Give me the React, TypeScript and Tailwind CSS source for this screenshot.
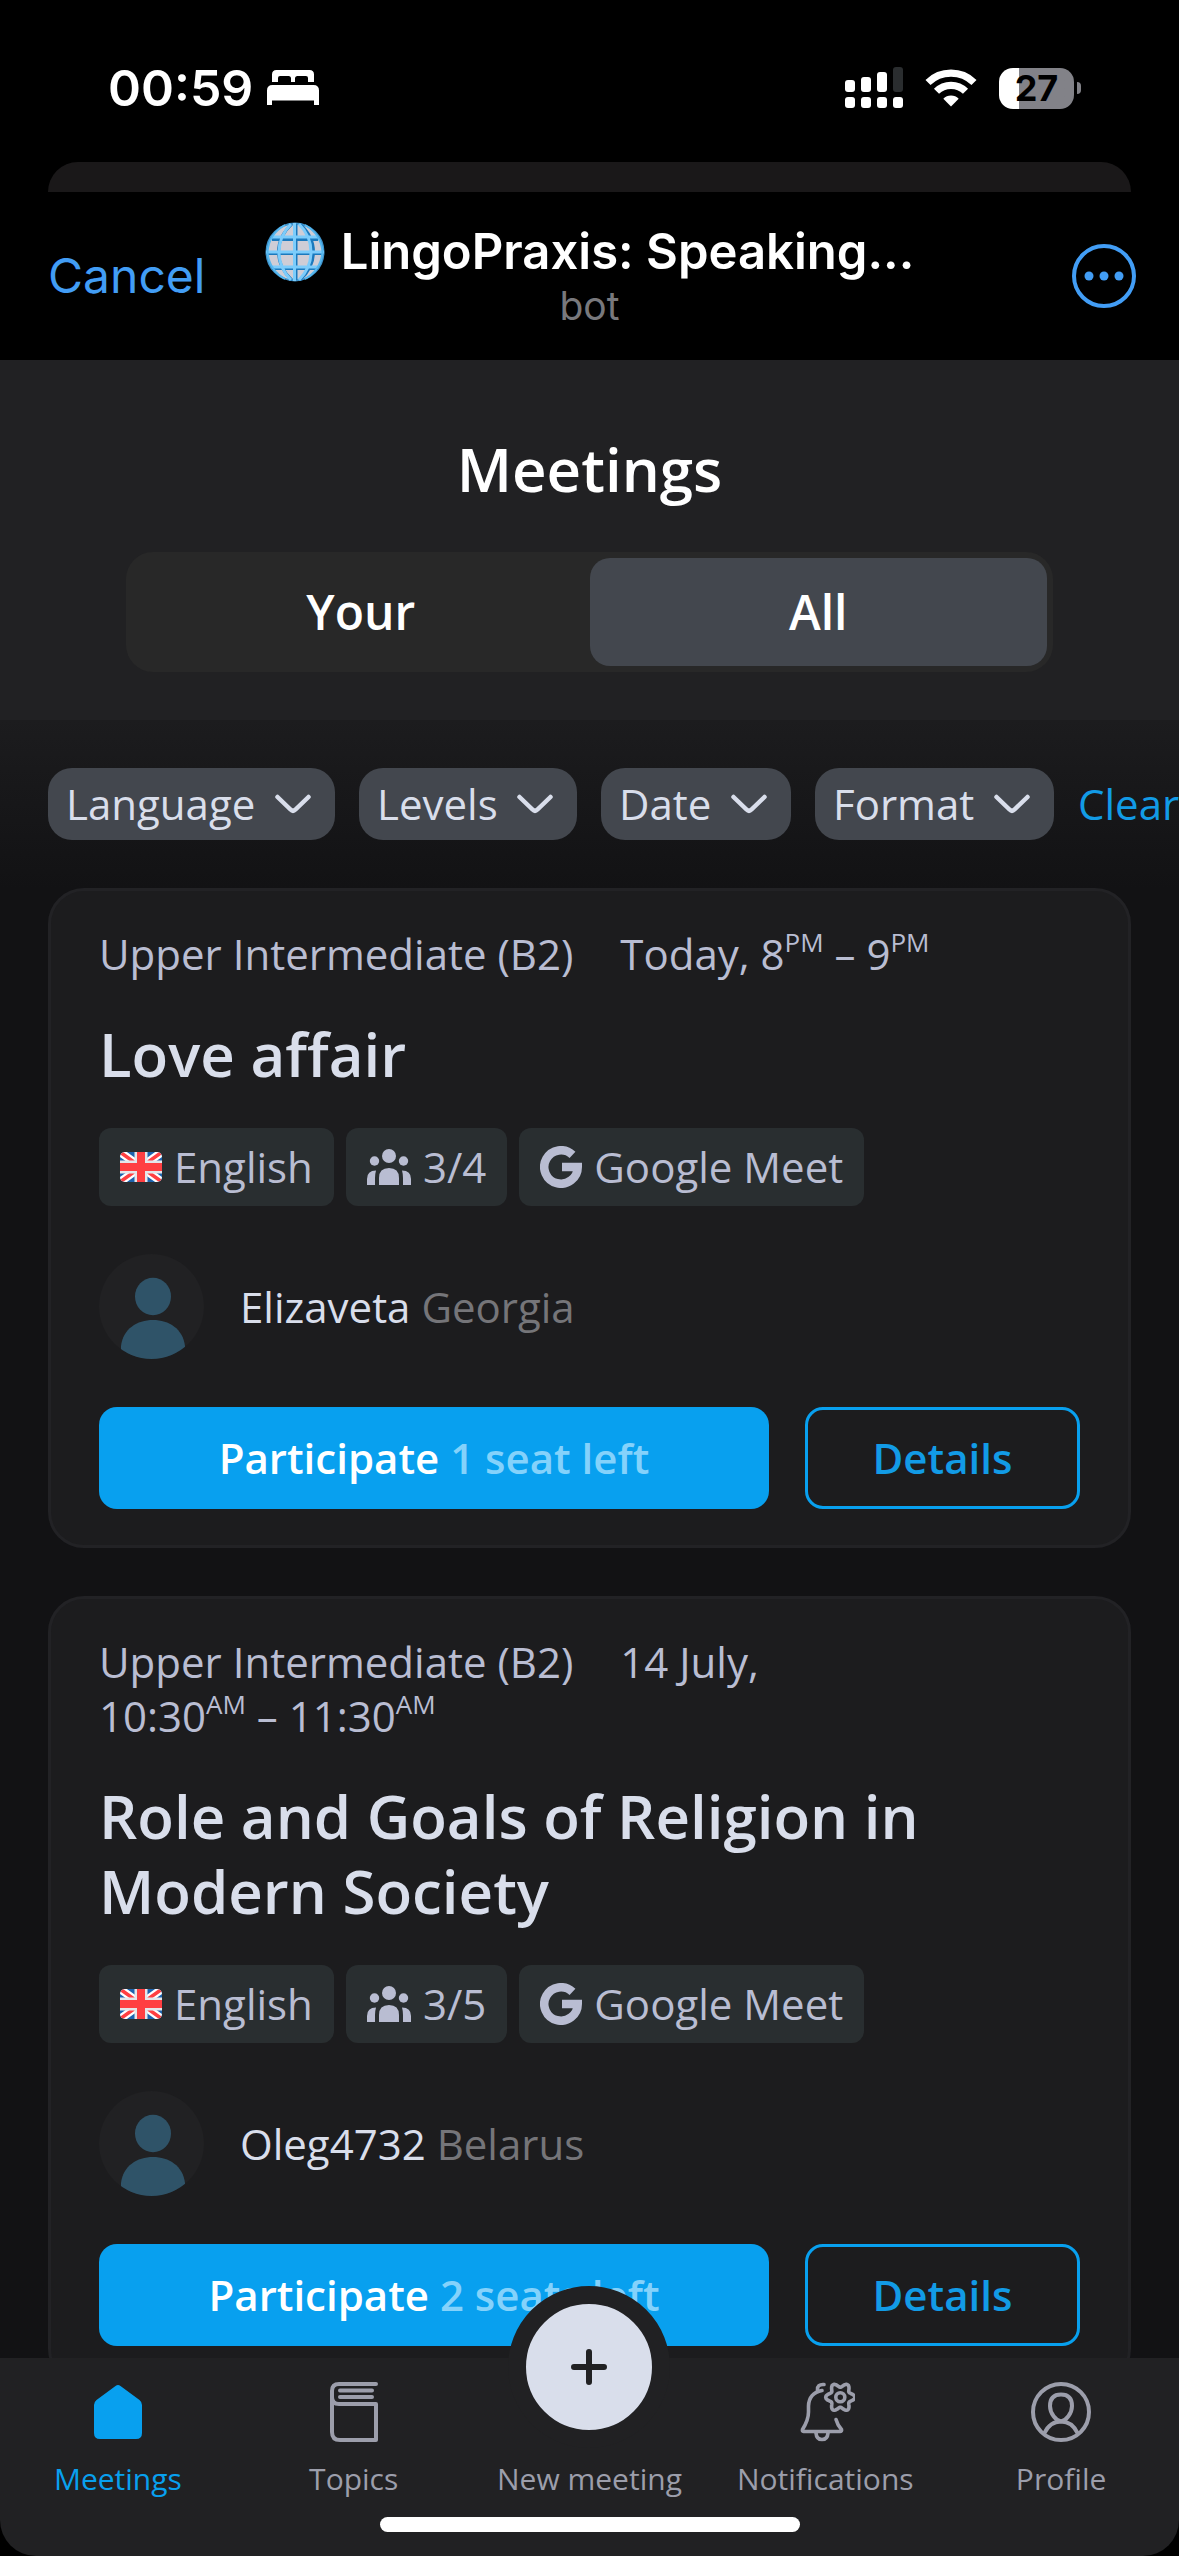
import { useState } from "react";
import type { ReactNode } from "react";

interface Meeting {
  level: string;
  day: string;
  from: [string, string];
  to: [string, string];
  title: string;
  seats: string;
  host: string;
  country: string;
  left: string;
}

const meetings: Meeting[] = [
  {
    level: "Upper Intermediate (B2)",
    day: "Today,",
    from: ["8", "PM"],
    to: ["9", "PM"],
    title: "Love affair",
    seats: "3/4",
    host: "Elizaveta",
    country: "Georgia",
    left: "1 seat left",
  },
  {
    level: "Upper Intermediate (B2)",
    day: "14 July,",
    from: ["10:30", "AM"],
    to: ["11:30", "AM"],
    title: "Role and Goals of Religion in Modern Society",
    seats: "3/5",
    host: "Oleg4732",
    country: "Belarus",
    left: "2 seats left",
  },
];

const filters = ["Language", "Levels", "Date", "Format"];

// Six-lobed outline for the gear on the notifications icon
const gearPath =
  Array.from({ length: 72 }, (_, i) => {
    const a = (i / 72) * Math.PI * 2;
    const r = 12.3 + 2.3 * Math.cos(6 * a);
    return `${i ? "L" : "M"}${(45.3 + r * Math.cos(a)).toFixed(2)} ${(15.3 + r * Math.sin(a)).toFixed(2)}`;
  }).join("") + "Z";

const BedIcon = () => (
  <svg viewBox="0 0 52 36" className="w-[52px] h-[36px]" fill="#fff" aria-hidden="true">
    <path d="M5 12V4.500Q5 0 9.500 0H42.500Q47 0 47 4.500V12H41V8Q41 6 39 6H30.500Q28 6 28 8.500V12H24V8.500Q24 6 21.500 6H13Q11 6 11 8V12Z" />
    <path d="M0 20.500Q0 15 5.500 15H46.500Q52 15 52 20.500V35H47V30.500H5V35H0Z" />
  </svg>
);

const SignalIcon = () => (
  <svg viewBox="0 0 58 42" className="w-[58px] h-[42px]" fill="#fff" aria-hidden="true">
    <rect x="0" y="13" width="10" height="12" rx="3" />
    <rect x="16" y="10" width="10" height="15" rx="3" />
    <rect x="32" y="5" width="10" height="20" rx="3" />
    <rect x="48" y="0" width="10" height="25" rx="3" fill="#2a2d2f" />
    <rect x="0" y="30" width="10" height="11" rx="3" />
    <rect x="16" y="30" width="10" height="11" rx="3" />
    <rect x="32" y="30" width="10" height="11" rx="3" />
    <rect x="48" y="30" width="10" height="11" rx="3" />
  </svg>
);

const WifiIcon = () => (
  <svg viewBox="0 0 52 38" className="w-[52px] h-[38px]" fill="none" stroke="#fff" strokeWidth="7.200" aria-hidden="true">
    <path d="M3 13.500A33 33 0 0 1 49 13.500" />
    <path d="M11.500 22.300A20.500 20.500 0 0 1 40.500 22.300" />
    <path d="M26 37.500L18.300 29.700A11 11 0 0 1 33.700 29.700Z" fill="#fff" stroke="none" />
  </svg>
);

const GlobeIcon = () => (
  <svg viewBox="0 0 60 60" className="w-[60px] h-[60px]" fill="none" stroke="#55b7ef" strokeWidth="3" aria-hidden="true">
    <circle cx="30" cy="30" r="28.500" fill="#cfcdd6" stroke="#3f94cc" strokeWidth="2" />
    <g stroke="#1b79bd">
      <path d="M31 2V58M27 2C9 18 9 42 27 58M35 2C53 18 53 42 35 58M2 31.500H58M7 17.500H53M7 46.500H53" />
    </g>
    <path d="M29.500 1V59M26 2C10 18 10 42 26 58M34 2C50 18 50 42 34 58M1 30H59M7 15H53M7 45H53" stroke="#7cccfb" />
    <path d="M20 3Q4 12 2.500 30M40 3Q56 12 57.500 30M2.500 30Q4 48 20 57M57.500 30Q56 48 40 57" strokeWidth="2" />
  </svg>
);

const ChevronIcon = () => (
  <svg
    viewBox="0 0 36 36"
    className="pointer-events-none absolute right-6 top-[18px] w-9 h-9"
    fill="none"
    stroke="#d9deeb"
    strokeWidth="4.500"
    strokeLinecap="round"
    strokeLinejoin="round"
    aria-hidden="true"
  >
    <path d="M2.500 11L15.500 23.500Q18 26 20.500 23.500L33.500 11" />
  </svg>
);

const FlagIcon = () => (
  <svg viewBox="0 0 42 30" className="w-[42px] h-[30px] rounded-[5px]" aria-hidden="true">
    <rect width="42" height="30" fill="#1c63ad" />
    <path d="M0 0L42 30M42 0L0 30" stroke="#fff" strokeWidth="8" />
    <path d="M0 0L42 30M42 0L0 30" stroke="#ff3f42" strokeWidth="3.500" />
    <path d="M21 0V30M0 15H42" stroke="#e4e6ea" strokeWidth="13" />
    <path d="M21 0V30M0 15H42" stroke="#ff3f42" strokeWidth="8" />
  </svg>
);

const PeopleIcon = () => (
  <svg viewBox="0 0 44 38" className="w-[44px] h-[38px]" fill="#b9bdd2" aria-hidden="true">
    <circle cx="22" cy="8" r="7" />
    <circle cx="7.500" cy="13" r="4.700" />
    <circle cx="36.500" cy="13" r="4.700" />
    <path d="M12 37V30Q12 20 22 20T32 30V37ZM0 37V31Q0 22.500 9 22.500Q8 26 8 30V37ZM44 37V31Q44 22.500 35 22.500Q36 26 36 30V37Z" />
  </svg>
);

const GoogleIcon = () => (
  <svg viewBox="0 0 42 42" className="w-[42px] h-[42px]" fill="none" stroke="#b9bdd2" strokeWidth="8.500" aria-hidden="true">
    <path d="M32.500 8.800A16.750 16.750 0 1 0 37.750 21H22" />
  </svg>
);

const Avatar = () => (
  <span className="block shrink-0 overflow-hidden rounded-full bg-[#212123] w-[105px] h-[105px]">
    <svg viewBox="0 0 105 105" fill="#2f5368" aria-hidden="true">
      <ellipse cx="54" cy="42.500" rx="18" ry="18.700" />
      <path d="M22 92C24 75 38 66 54 66S84 75 86 92V105H22Z" />
    </svg>
  </span>
);

const HomeIcon = () => (
  <svg viewBox="0 0 60 60" className="w-[60px] h-[60px]" fill="currentColor" aria-hidden="true">
    <path d="M27.500 4Q30 2 32.500 4L51.500 18Q54 20 54 23V51Q54 57 48 57H12Q6 57 6 51V23Q6 20 8.500 18Z" />
  </svg>
);

const BookIcon = () => (
  <svg viewBox="0 0 60 60" className="w-[60px] h-[60px]" fill="none" stroke="currentColor" strokeWidth="4" strokeLinecap="round" strokeLinejoin="round" aria-hidden="true">
    <path d="M52 2H15Q8 2 8 9V50Q8 58 16 58H52V22H15Q8 22 8 15" />
    <path d="M16 8.500H48M16 15H48" />
  </svg>
);

const BellIcon = () => (
  <svg viewBox="0 0 60 60" className="w-[60px] h-[60px]" fill="none" stroke="currentColor" strokeWidth="3.600" strokeLinecap="round" strokeLinejoin="round" aria-hidden="true">
    <path d="M27 8.500Q14 11 13.500 24V30Q13.500 38 7.500 47.500Q7 49.500 8.500 49.500H45Q47 49.500 46.500 47.500Q42.500 43 41 37.500" />
    <path d="M22.500 8Q22 2 29 2.500" />
    <path d="M21 50V51Q21.500 57.500 27 57.500T33 51V50" />
    <path d={gearPath} />
    <circle cx="45.300" cy="15.300" r="4.500" />
  </svg>
);

const ProfileIcon = () => (
  <svg viewBox="0 0 60 60" className="w-[60px] h-[60px]" fill="none" stroke="currentColor" strokeWidth="4" strokeLinecap="round" aria-hidden="true">
    <circle cx="30" cy="30" r="28" />
    <path d="M30 39.500C25 38.500 19 31.500 19 24Q19 12.500 30 12.500T41 24C41 31.500 35 38.500 30 39.500Z" />
    <path d="M13.500 51Q19 39.500 30 39.500T46.500 51" />
  </svg>
);

const Tag = ({ icon, children }: { icon: ReactNode; children: ReactNode }) => (
  <li className="flex h-[78px] items-center gap-3 rounded-xl bg-[#292e30] px-[21px]">
    {icon}
    {children}
  </li>
);

const Time = ({ value: [hour, half] }: { value: [string, string] }) => (
  <>
    {hour}
    <sup className="static align-[18px] text-[26px] leading-none">{half}</sup>
  </>
);

const MeetingCard = ({ meeting }: { meeting: Meeting }) => (
  <article className="rounded-[36px] border-[3px] border-[#222225] bg-[#1c1c1e] px-12 py-9">
    <p className="max-w-[860px] text-[#b9bdd2] leading-[54px]">
      <span className="mr-9">{meeting.level}</span> {meeting.day}{" "}
      <span className="whitespace-nowrap">
        <Time value={meeting.from} /> – <Time value={meeting.to} />
      </span>
    </p>
    <h2 className="mt-9 text-[60px] leading-[75px] font-semibold text-[#d9deeb]">{meeting.title}</h2>
    <ul className="mt-9 flex flex-wrap gap-3 text-[#b9bdd2]">
      <Tag icon={<FlagIcon />}>English</Tag>
      <Tag icon={<PeopleIcon />}>{meeting.seats}</Tag>
      <Tag icon={<GoogleIcon />}>Google Meet</Tag>
    </ul>
    <div className="mt-12 flex items-center gap-9">
      <Avatar />
      <p className="text-[#d9deeb]">
        {meeting.host} <span className="text-[#757579]">{meeting.country}</span>
      </p>
    </div>
    <div className="mt-12 flex gap-9 font-semibold">
      <button className="h-[102px] grow rounded-[18px] bg-[#08a0ef] text-white">
        Participate <span className="text-[#84d2fb]">{meeting.left}</span>
      </button>
      <button className="h-[102px] w-[275px] rounded-[18px] border-[3px] border-[#08a0ef] text-[#129be6]">
        Details
      </button>
    </div>
  </article>
);

const NavLink = ({ icon, label, active }: { icon: ReactNode; label: string; active?: boolean }) => (
  <a
    href="#"
    aria-current={active ? "page" : undefined}
    className={`flex flex-col items-center gap-4 pt-6 ${active ? "text-[#08a0ef]" : "text-[#9c9eab]"}`}
  >
    {icon}
    <span className="whitespace-nowrap">{label}</span>
  </a>
);

function App() {
  const [tab, setTab] = useState("All");

  return (
    <div className="min-h-screen bg-[#121214] font-['Open_Sans',sans-serif] text-[42px] leading-[54px]">
      {/* Phone status bar and Telegram header */}
      <div className="bg-black font-['Inter',sans-serif] text-white">
        <div className="flex h-[162px] items-center justify-between pt-[14px] pl-[108px] pr-[98px]">
          <div className="flex items-center gap-[14px]">
            <span className="text-[50px] font-semibold">00:59</span>
            <BedIcon />
          </div>
          <div className="flex items-center gap-[22px]">
            <SignalIcon />
            <WifiIcon />
            <div className="flex items-center gap-[3px]">
              <span className="flex h-[41px] w-[75px] items-center justify-center rounded-[14px] bg-linear-to-r from-white from-27% to-[#828288] to-27% text-[36px] font-bold text-black">
                27
              </span>
              <span className="h-[12px] w-[4px] rounded-r-full bg-[#828288]" />
            </div>
          </div>
        </div>
        <div className="mx-12 h-[30px] rounded-t-[30px] bg-[#1a1819]" />
        <header className="flex h-[168px] items-center pr-[43px] pl-12">
          <button className="w-[175px] text-left text-[#429df5] text-[48px]">Cancel</button>
          <div className="flex min-w-0 grow flex-col items-center">
            <h1 className="flex items-center gap-4 whitespace-nowrap text-[49px] leading-[60px] font-semibold">
              <GlobeIcon />
              LingoPraxis: Speaking...
            </h1>
            <p className="text-[39px] leading-[48px] text-[#78787c]">bot</p>
          </div>
          <button aria-label="More" className="flex w-[180px] justify-end">
            <svg viewBox="0 0 64 64" className="w-[64px] h-[64px]" fill="#429df5" aria-hidden="true">
              <circle cx="32" cy="32" r="30" fill="none" stroke="#429df5" strokeWidth="4" />
              <circle cx="17" cy="32" r="4.500" />
              <circle cx="32" cy="32" r="4.500" />
              <circle cx="47" cy="32" r="4.500" />
            </svg>
          </button>
        </header>
      </div>

      <section className="bg-[#212123] px-[126px] pt-[72px] pb-12 text-center font-semibold text-white">
        <h2 className="text-[60px] leading-[75px]">Meetings</h2>
        <div role="tablist" className="mt-[45px] grid h-[120px] grid-cols-2 rounded-[27px] bg-[#282828] p-[6px] text-[48px]">
          {["Your", "All"].map((name) => (
            <button
              key={name}
              role="tab"
              aria-selected={tab === name}
              onClick={() => setTab(name)}
              className={`rounded-[20px] ${tab === name ? "bg-[#43474e]" : ""}`}
            >
              {name}
            </button>
          ))}
        </div>
      </section>

      <div className="flex items-center gap-6 overflow-x-auto bg-linear-to-b from-[#1c1c1e] to-[#121214] py-12 pl-12 [scrollbar-width:none]">
        {filters.map((name) => (
          <div key={name} className="relative shrink-0">
            <select
              aria-label={name}
              className="block h-[72px] appearance-none rounded-[24px] bg-[#43474e] pl-[18px] pr-[79px] text-[#d9deeb]"
            >
              <option>{name}</option>
            </select>
            <ChevronIcon />
          </div>
        ))}
        <button className="shrink-0 text-[#129be6]">Clear</button>
      </div>

      <main className="flex flex-col gap-12 px-12 pb-[160px]">
        {meetings.map((meeting) => (
          <MeetingCard key={meeting.title} meeting={meeting} />
        ))}
      </main>

      {/* Tab bar */}
      <div className="fixed inset-x-0 bottom-0 bg-black">
        <nav className="grid h-[198px] grid-cols-5 rounded-b-[36px] bg-[#212123] text-[30px] leading-[42px]">
          <NavLink icon={<HomeIcon />} label="Meetings" active />
          <NavLink icon={<BookIcon />} label="Topics" />
          <a href="#" className="relative flex flex-col items-center pt-[100px] text-[#9c9eab]">
            <span className="absolute -top-[72px] flex h-[162px] w-[162px] items-center justify-center rounded-full border-[18px] border-[#212123] bg-[#d9deeb]">
              <svg viewBox="0 0 36 36" className="w-9 h-9" stroke="#212123" strokeWidth="6" strokeLinecap="round" aria-hidden="true">
                <path d="M18 3V33M3 18H33" />
              </svg>
            </span>
            <span className="whitespace-nowrap">New meeting</span>
          </a>
          <NavLink icon={<BellIcon />} label="Notifications" />
          <NavLink icon={<ProfileIcon />} label="Profile" />
        </nav>
        <div className="absolute bottom-6 left-1/2 h-[15px] w-[420px] -translate-x-1/2 rounded-full bg-white" />
      </div>
    </div>
  );
}

export default App;
